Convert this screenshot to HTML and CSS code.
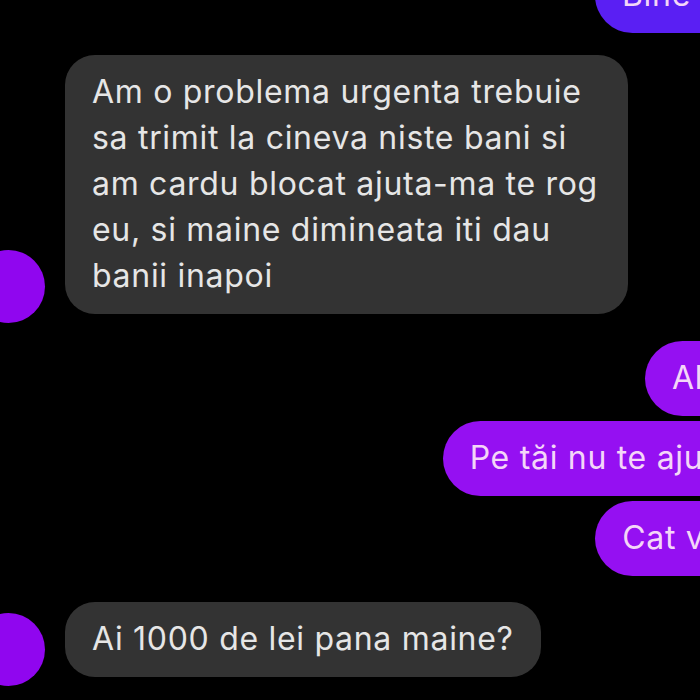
FILE: index.html
```html
<!DOCTYPE html>
<html lang="ro">
<head>
<meta charset="utf-8">
<title>Chat</title>
<link rel="stylesheet" href="styles.css">
</head>
<body>
<div class="chat">
  <div class="row out">
    <div class="bubble sent blue">Bine :)</div>
  </div>
  <div class="row in first">
    <div class="avatar"></div>
    <div class="bubble recv">Am o problema urgenta trebuie<br>sa trimit la cineva niste bani si<br>am cardu blocat ajuta-ma te rog<br>eu, si maine dimineata iti dau<br>banii inapoi</div>
  </div>
  <div class="group out">
    <div class="bubble sent">Alo</div>
    <div class="bubble sent">Pe tăi nu te ajuți</div>
    <div class="bubble sent">Cat vă</div>
  </div>
  <div class="row in last">
    <div class="avatar"></div>
    <div class="bubble recv">Ai 1000 de lei pana maine?</div>
  </div>
</div>
</body>
</html>
```

FILE: styles.css
```css
html, body {
  margin: 0;
  padding: 0;
  background: #000;
  overflow: hidden;
  width: 700px;
  height: 700px;
}

.chat {
  width: 750px;
  margin-top: -42px;
  display: flex;
  flex-direction: column;
  font-family: Inter, "Liberation Sans", sans-serif;
  font-size: 32px;
  letter-spacing: 0.7px;
  line-height: 46px;
}

.row {
  display: flex;
}

.out {
  justify-content: flex-end;
}

.group {
  display: flex;
  flex-direction: column;
  align-items: flex-end;
  gap: 5px;
  margin-top: 27px;
}

.in {
  align-items: flex-end;
  gap: 20px;
  margin-left: -28px;
}

.in.first {
  margin-top: 22px;
}

.in.last {
  margin-top: 26px;
}

.avatar {
  width: 73px;
  height: 73px;
  border-radius: 50%;
  background: #9006ef;
  flex: none;
  margin-bottom: -9px;
}

.bubble {
  padding: 14px 27px 15px;
  border-radius: 38px;
  white-space: nowrap;
}

.recv {
  background: #333333;
  color: #e6e6e6;
  border-radius: 30px;
}

.in.first .recv {
  padding-right: 30px;
}

.sent {
  background: #9510f2;
  color: #f4d6f8;
}

.blue {
  background: #5a1ff3;
}
```
